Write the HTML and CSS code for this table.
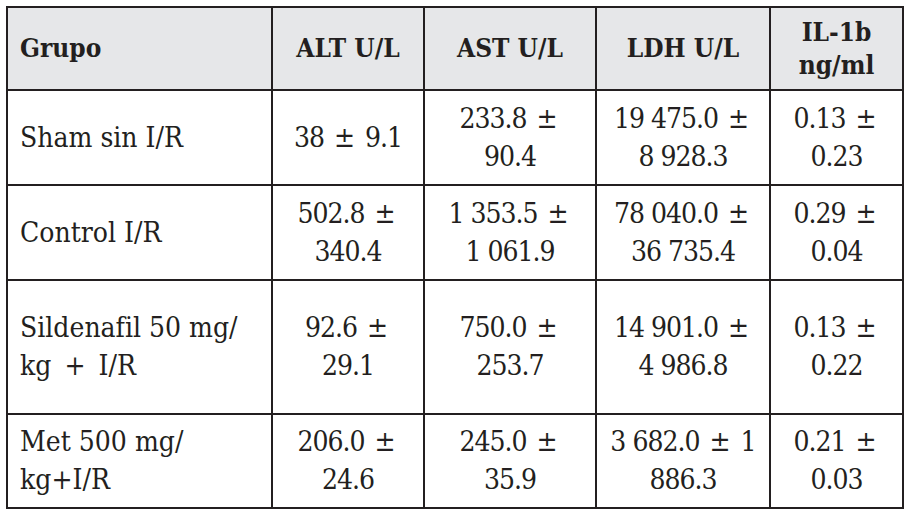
FILE: index.html
```html
<!DOCTYPE html>
<html lang="es">
<head>
<meta charset="utf-8">
<link rel="stylesheet" href="styles.css">
</head>
<body>
<div class="page">
<table class="data">
  <colgroup>
    <col class="c1"><col class="c2"><col class="c3"><col class="c4"><col class="c5">
  </colgroup>
  <thead>
    <tr class="hrow">
      <th class="left">Grupo</th>
      <th>ALT U/L</th>
      <th>AST U/L</th>
      <th>LDH U/L</th>
      <th>IL-1b<br>ng/ml</th>
    </tr>
  </thead>
  <tbody>
    <tr class="r1">
      <td class="left">Sham sin I/R</td>
      <td class="num">38 <span class="pm">±</span> 9.1</td>
      <td class="num">233.8 <span class="pm">±</span><br>90.4</td>
      <td class="num">19&nbsp;475.0 <span class="pm">±</span><br>8&nbsp;928.3</td>
      <td class="num">0.13 <span class="pm">±</span><br>0.23</td>
    </tr>
    <tr class="r2">
      <td class="left">Control I/R</td>
      <td class="num">502.8 <span class="pm">±</span><br>340.4</td>
      <td class="num">1&nbsp;353.5 <span class="pm">±</span><br>1&nbsp;061.9</td>
      <td class="num">78&nbsp;040.0 <span class="pm">±</span><br>36&nbsp;735.4</td>
      <td class="num">0.29 <span class="pm">±</span><br>0.04</td>
    </tr>
    <tr class="r3">
      <td class="left">Sildenafil 50 mg/<br>kg <span class="wide">+</span> I/R</td>
      <td class="num">92.6 <span class="pm">±</span><br>29.1</td>
      <td class="num">750.0 <span class="pm">±</span><br>253.7</td>
      <td class="num">14&nbsp;901.0 <span class="pm">±</span><br>4&nbsp;986.8</td>
      <td class="num">0.13 <span class="pm">±</span><br>0.22</td>
    </tr>
    <tr class="r4">
      <td class="left">Met 500 mg/<br>kg+I/R</td>
      <td class="num">206.0 <span class="pm">±</span><br>24.6</td>
      <td class="num">245.0 <span class="pm">±</span><br>35.9</td>
      <td class="num">3&nbsp;682.0 <span class="pm">±</span> 1<br>886.3</td>
      <td class="num">0.21 <span class="pm">±</span><br>0.03</td>
    </tr>
  </tbody>
</table>
</div>
</body>
</html>
```
FILE: styles.css
```css
html, body {
  margin: 0;
  padding: 0;
  background: #ffffff;
}
.page {
  padding: 6px 0 0 6px;
}
.data {
  border-collapse: collapse;
  table-layout: fixed;
  width: 898px;
  font-family: "DejaVu Serif Condensed", "DejaVu Serif", serif;
  font-stretch: condensed;
  font-size: 28px;
  color: #231f20;
}
.c1 { width: 265px; }
.c2 { width: 152px; }
.c3 { width: 172px; }
.c4 { width: 174px; }
.c5 { width: 133px; }
.data th, .data td {
  border: 2px solid #231f20;
  text-align: center;
  vertical-align: middle;
  padding: 0 2px;
  white-space: nowrap;
}
.data th {
  background: #e6e7e9;
  font-weight: bold;
  font-size: 26px;
  line-height: 33px;
}
.data td {
  font-weight: normal;
  line-height: 38px;
}
.data td.num {
  letter-spacing: -1px;
}
.pm {
  letter-spacing: 0;
  margin: 0 3px;
}
.wide {
  margin: 0 5px;
}
.data .left {
  text-align: left;
  padding-left: 12px;
}
.hrow { height: 83px; }
.r1 { height: 95px; }
.r2 { height: 95px; }
.r3 { height: 134px; }
.r4 { height: 94px; }
```
